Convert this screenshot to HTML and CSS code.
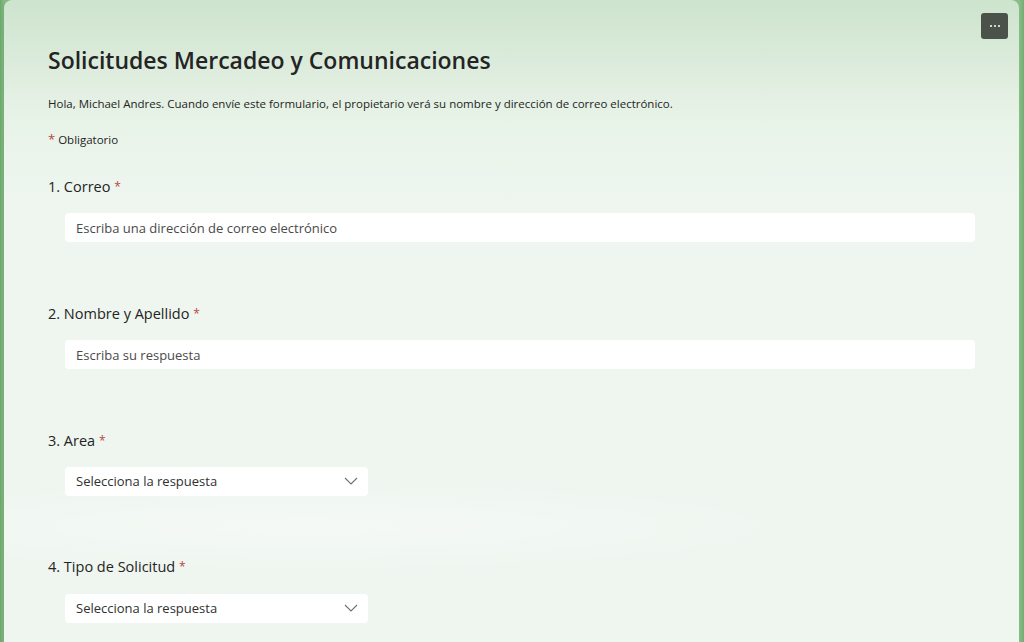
FILE: index.html
```html
<!DOCTYPE html>
<html lang="es">
<head>
<meta charset="utf-8">
<title>Solicitudes Mercadeo y Comunicaciones</title>
<link rel="stylesheet" href="styles.css">
</head>
<body>
<div class="page">
  <main class="card">
    <button class="more" aria-label="Más opciones">
      <span class="dot"></span><span class="dot"></span><span class="dot"></span>
    </button>
    <h1 class="title">Solicitudes Mercadeo y Comunicaciones</h1>
    <p class="desc">Hola, Michael Andres. Cuando envíe este formulario, el propietario verá su nombre y dirección de correo electrónico.</p>
    <p class="req"><span class="star">*</span> Obligatorio</p>
    <div class="questions">
      <section class="question">
        <div class="label">1. Correo <span class="star">*</span></div>
        <div class="field text">Escriba una dirección de correo electrónico</div>
      </section>
      <section class="question">
        <div class="label">2. Nombre y Apellido <span class="star">*</span></div>
        <div class="field text">Escriba su respuesta</div>
      </section>
      <section class="question">
        <div class="label">3. Area <span class="star">*</span></div>
        <div class="field select"><span>Selecciona la respuesta</span>
          <svg class="chev" width="14" height="8" viewBox="0 0 14 8"><path d="M1 1 L7 7 L13 1" fill="none" stroke="#707070" stroke-width="1.1"/></svg>
        </div>
      </section>
      <section class="question">
        <div class="label">4. Tipo de Solicitud <span class="star">*</span></div>
        <div class="field select"><span>Selecciona la respuesta</span>
          <svg class="chev" width="14" height="8" viewBox="0 0 14 8"><path d="M1 1 L7 7 L13 1" fill="none" stroke="#707070" stroke-width="1.1"/></svg>
        </div>
      </section>
    </div>
  </main>
</div>
</body>
</html>
```

FILE: styles.css
```css
html, body {
  margin: 0;
  height: 100%;
  overflow: hidden;
}
body {
  background: linear-gradient(90deg, #6aa96a 0%, #86bb86 0.4%, #b9d8b9 50%, #8cbd8c 99.5%, #6fae6f 100%);
  font-family: "Open Sans", "Noto Sans", sans-serif;
  color: #242424;
}
.page {
  padding: 0 5px 0 4px;
  height: 100%;
}
.card {
  position: relative;
  box-sizing: border-box;
  height: 100%;
  padding: 44px 44px 0 44px;
  border-radius: 8px 8px 0 0;
  background:
    radial-gradient(ellipse 70% 10% at 30% 82%, rgba(255,255,255,0.35), rgba(255,255,255,0) 70%),
    linear-gradient(180deg, #cde4cd 0px, #dbebdb 60px, #e8f3e8 120px, #eef6ef 200px, #eff6f0 100%);
  box-shadow: -1px 0 2px rgba(0,0,0,0.08);
}
.more {
  position: absolute;
  top: 13px;
  right: 11px;
  width: 27px;
  height: 26px;
  border: 0;
  border-radius: 3px;
  background: #4b5249;
  display: flex;
  align-items: center;
  justify-content: center;
  gap: 2px;
  padding: 0;
}
.dot {
  width: 2px;
  height: 2px;
  background: #fff;
  border-radius: 50%;
}
.title {
  margin: 0;
  font-size: 23px;
  line-height: 32px;
  font-weight: 600;
  color: #242424;
}
.desc {
  margin: 20px 0 0;
  font-size: 11.5px;
  line-height: 16px;
}
.req {
  margin: 20px 0 0;
  height: 16px;
  font-size: 11.5px;
  line-height: 16px;
}
.star {
  color: #b8473f;
  font-size: 12px;
  line-height: 0;
  vertical-align: 1px;
}
.req .star {
  font-size: 13px;
  vertical-align: 0;
}
.questions {
  margin-top: 29px;
  display: flex;
  flex-direction: column;
  gap: 61.5px;
}
.label {
  height: 20px;
  font-size: 14.5px;
  line-height: 20px;
}
.field {
  margin: 16.3px 0 0 17px;
  height: 29px;
  box-sizing: border-box;
  background: #fff;
  border-radius: 4px;
  padding: 0 11px;
  display: flex;
  align-items: center;
  font-size: 13px;
  color: #4a4a4a;
}
.select {
  width: 303px;
  justify-content: space-between;
  color: #303030;
  padding-right: 10px;
}
.chev {
  display: block;
}
```
